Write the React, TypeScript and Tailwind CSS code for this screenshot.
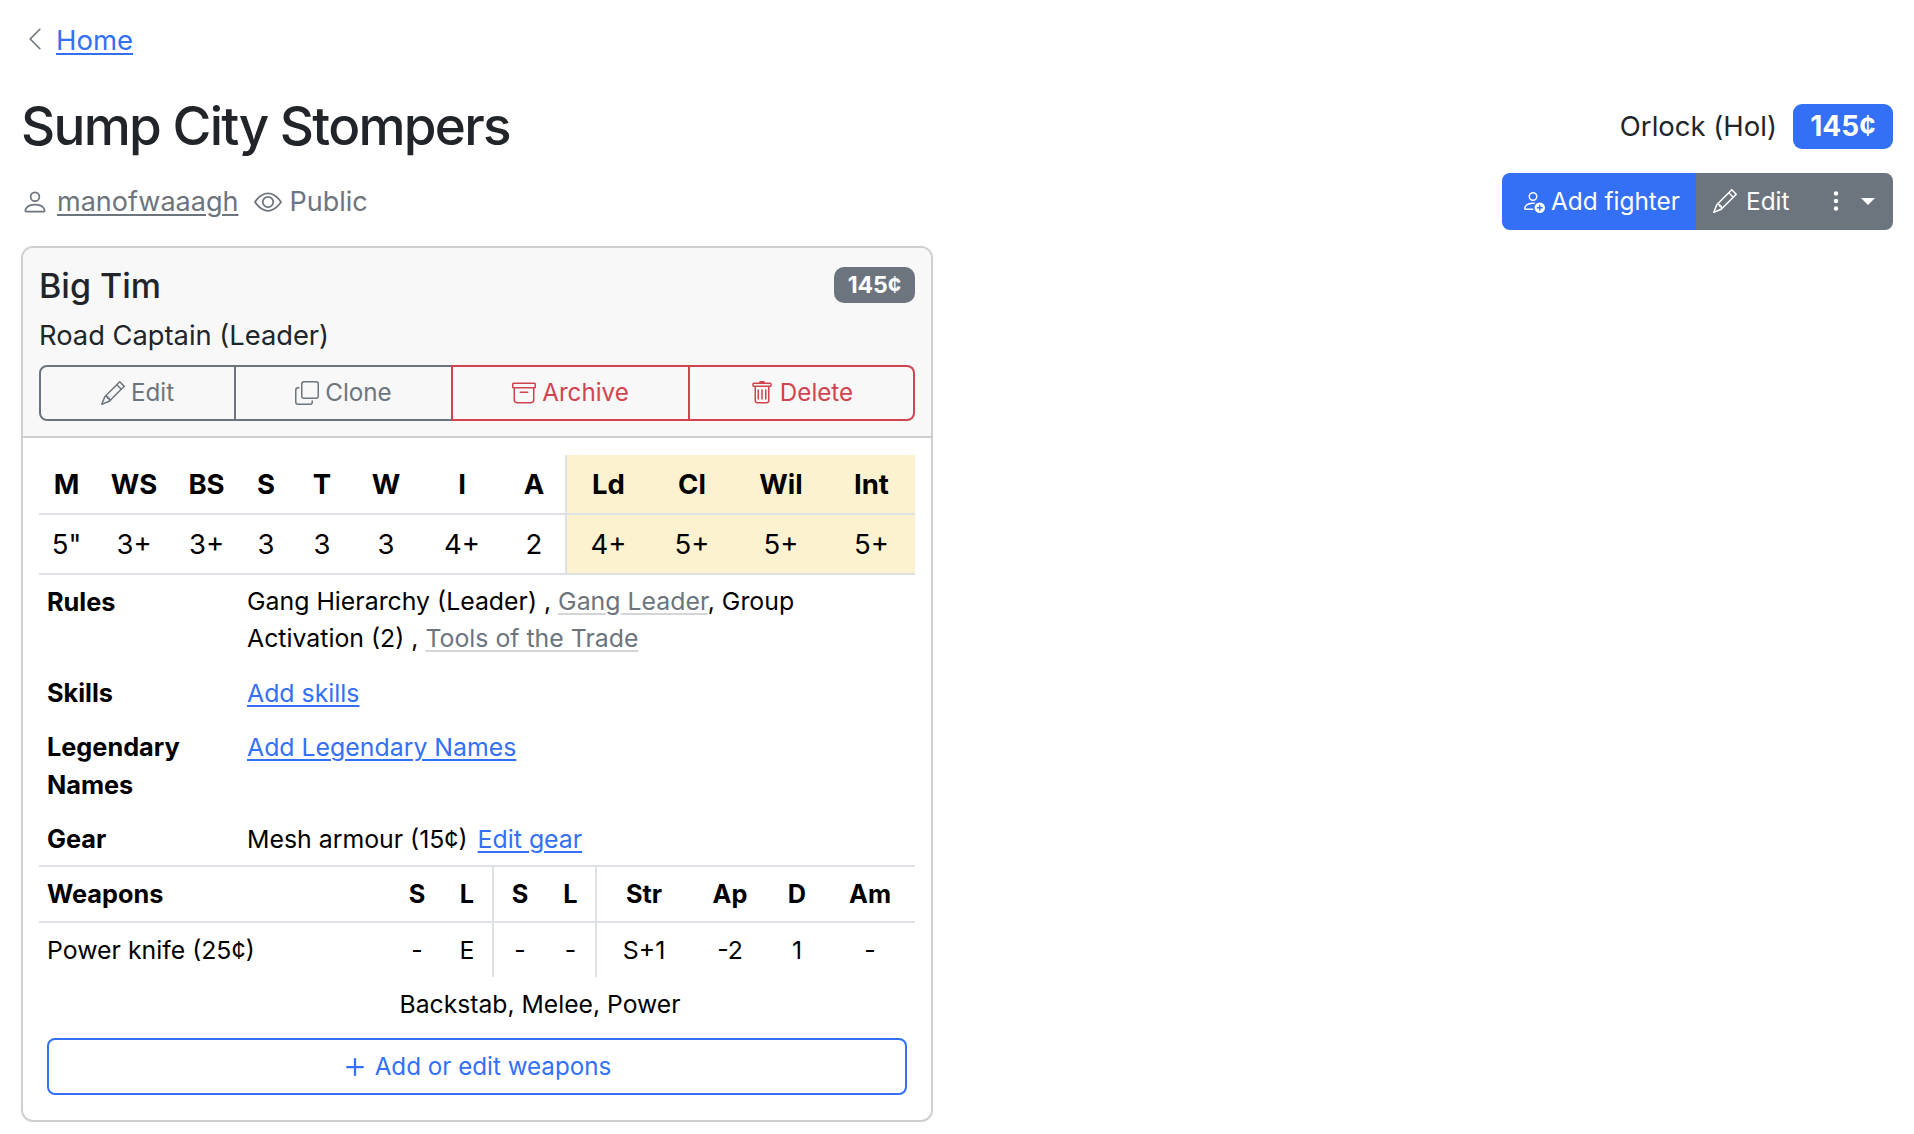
import React from "react";

const Chevron = ({ c = "" }: { c?: string }) => (
  <svg viewBox="0 0 16 16" fill="currentColor" className={c}>
    <path fillRule="evenodd" d="M11.354 1.646a.5.5 0 0 1 0 .708L5.707 8l5.647 5.646a.5.5 0 0 1-.708.708l-6-6a.5.5 0 0 1 0-.708l6-6a.5.5 0 0 1 .708 0" />
  </svg>
);
const Pencil = ({ c = "" }: { c?: string }) => (
  <svg viewBox="0 0 16 16" fill="currentColor" className={c}>
    <path d="M12.146.146a.5.5 0 0 1 .708 0l3 3a.5.5 0 0 1 0 .708l-10 10a.5.5 0 0 1-.168.11l-5 2a.5.5 0 0 1-.65-.65l2-5a.5.5 0 0 1 .11-.168zM11.207 2.5 13.5 4.793 14.793 3.5 12.5 1.207zm1.586 3L10.5 3.207 4 9.707V10h.5a.5.5 0 0 1 .5.5v.5h.5a.5.5 0 0 1 .5.5v.5h.293zm-9.761 5.175-.106.106-1.528 3.821 3.821-1.528.106-.106A.5.5 0 0 1 5 12.5V12h-.5a.5.5 0 0 1-.5-.5V11h-.5a.5.5 0 0 1-.468-.325" />
  </svg>
);
const Person = ({ c = "" }: { c?: string }) => (
  <svg viewBox="0 0 16 16" fill="currentColor" className={c}>
    <path d="M8 8a3 3 0 1 0 0-6 3 3 0 0 0 0 6m2-3a2 2 0 1 1-4 0 2 2 0 0 1 4 0m4 8c0 1-1 1-1 1H3s-1 0-1-1 1-4 6-4 6 3 6 4m-1-.004c-.001-.246-.154-.986-.832-1.664C11.516 10.68 10.289 10 8 10s-3.516.68-4.168 1.332c-.678.678-.83 1.418-.832 1.664z" />
  </svg>
);
const Eye = ({ c = "" }: { c?: string }) => (
  <svg viewBox="0 0 16 16" fill="currentColor" className={c}>
    <path d="M16 8s-3-5.5-8-5.5S0 8 0 8s3 5.5 8 5.5S16 8 16 8M1.173 8a13 13 0 0 1 1.66-2.043C4.12 4.668 5.88 3.5 8 3.5s3.879 1.168 5.168 2.457A13 13 0 0 1 14.828 8q-.086.13-.195.288c-.335.48-.83 1.12-1.465 1.755C11.879 11.332 10.119 12.5 8 12.5s-3.879-1.168-5.168-2.457A13 13 0 0 1 1.172 8z" />
    <path d="M8 5.5a2.5 2.5 0 1 0 0 5 2.5 2.5 0 0 0 0-5M4.5 8a3.5 3.5 0 1 1 7 0 3.5 3.5 0 0 1-7 0" />
  </svg>
);
const PersonAdd = ({ c = "" }: { c?: string }) => (
  <svg viewBox="0 0 16 16" fill="currentColor" className={c}>
    <path d="M12.5 16a3.5 3.5 0 1 0 0-7 3.5 3.5 0 0 0 0 7m.5-5v1h1a.5.5 0 0 1 0 1h-1v1a.5.5 0 0 1-1 0v-1h-1a.5.5 0 0 1 0-1h1v-1a.5.5 0 0 1 1 0m-2-6a3 3 0 1 1-6 0 3 3 0 0 1 6 0M8 7a2 2 0 1 0 0-4 2 2 0 0 0 0 4" />
    <path d="M8.256 14a4.5 4.5 0 0 1-.229-1.004H3c.001-.246.154-.986.832-1.664C4.484 10.68 5.711 10 8 10q.39 0 .74.025c.226-.341.496-.65.804-.918Q8.844 9.002 8 9c-5 0-6 3-6 4s1 1 1 1z" />
  </svg>
);
const Copy = ({ c = "" }: { c?: string }) => (
  <svg viewBox="0 0 16 16" fill="currentColor" fillRule="evenodd" className={c}>
    <path d="M4 2a2 2 0 0 1 2-2h8a2 2 0 0 1 2 2v8a2 2 0 0 1-2 2H6a2 2 0 0 1-2-2zm2-1a1 1 0 0 0-1 1v8a1 1 0 0 0 1 1h8a1 1 0 0 0 1-1V2a1 1 0 0 0-1-1zM2 5a1 1 0 0 0-1 1v8a1 1 0 0 0 1 1h8a1 1 0 0 0 1-1v-1h1v1a2 2 0 0 1-2 2H2a2 2 0 0 1-2-2V6a2 2 0 0 1 2-2h1v1z" />
  </svg>
);
const Archive = ({ c = "" }: { c?: string }) => (
  <svg viewBox="0 0 16 16" fill="currentColor" className={c}>
    <path d="M0 2a1 1 0 0 1 1-1h14a1 1 0 0 1 1 1v2a1 1 0 0 1-1 1v7.5a2.5 2.5 0 0 1-2.5 2.5h-9A2.5 2.5 0 0 1 1 12.5V5a1 1 0 0 1-1-1zm2 3v7.5A1.5 1.5 0 0 0 3.5 14h9a1.5 1.5 0 0 0 1.5-1.5V5zm13-3H1v2h14zM5 7.5a.5.5 0 0 1 .5-.5h5a.5.5 0 0 1 0 1h-5a.5.5 0 0 1-.5-.5" />
  </svg>
);
const Trash = ({ c = "" }: { c?: string }) => (
  <svg viewBox="0 0 16 16" fill="currentColor" className={c}>
    <path d="M5.5 5.5A.5.5 0 0 1 6 6v6a.5.5 0 0 1-1 0V6a.5.5 0 0 1 .5-.5m2.5 0a.5.5 0 0 1 .5.5v6a.5.5 0 0 1-1 0V6a.5.5 0 0 1 .5-.5m3 .5a.5.5 0 0 0-1 0v6a.5.5 0 0 0 1 0z" />
    <path d="M14.5 3a1 1 0 0 1-1 1H13v9a2 2 0 0 1-2 2H5a2 2 0 0 1-2-2V4h-.5a1 1 0 0 1-1-1V2a1 1 0 0 1 1-1H6a1 1 0 0 1 1-1h2a1 1 0 0 1 1 1h3.5a1 1 0 0 1 1 1zM4.118 4 4 4.059V13a1 1 0 0 0 1 1h6a1 1 0 0 0 1-1V4.059L11.882 4zM2.5 3h11V2h-11z" />
  </svg>
);
const Plus = ({ c = "" }: { c?: string }) => (
  <svg viewBox="0 0 16 16" fill="currentColor" className={c}>
    <path d="M8 4a.5.5 0 0 1 .5.5v3h3a.5.5 0 0 1 0 1h-3v3a.5.5 0 0 1-1 0v-3h-3a.5.5 0 0 1 0-1h3v-3A.5.5 0 0 1 8 4" />
  </svg>
);
const Dots = ({ c = "" }: { c?: string }) => (
  <svg viewBox="0 0 16 16" fill="currentColor" className={c}>
    <path d="M9.5 13a1.5 1.5 0 1 1-3 0 1.5 1.5 0 0 1 3 0m0-5a1.5 1.5 0 1 1-3 0 1.5 1.5 0 0 1 3 0m0-5a1.5 1.5 0 1 1-3 0 1.5 1.5 0 0 1 3 0" />
  </svg>
);

const link = "text-[#3370f6] underline decoration-2 underline-offset-[3px]";
const muted = "text-[#6c757d] underline decoration-2 decoration-[#d3d5d7] underline-offset-[3px]";
const stats1 = [["M", '5"', "w-[55px]"], ["WS", "3+", "w-[80px]"], ["BS", "3+", "w-[65px]"], ["S", "3", "w-[54px]"], ["T", "3", "w-[58px]"], ["W", "3", "w-[70px]"], ["I", "4+", "w-[82px]"], ["A", "2", "w-[62px]"]];
const stats2 = [["Ld", "4+", "w-[83px]"], ["Cl", "5+", "w-[84px]"], ["Wil", "5+", "w-[94px]"], ["Int", "5+", "flex-1"]];
const wcols = [
  ["S", "-", "w-[50px]"], ["L", "E", "w-[52px] border-r-2 border-[#dee2e6]"], ["S", "-", "w-[52px]"], ["L", "-", "w-[51px] border-r-2 border-[#dee2e6]"],
  ["Str", "S+1", "w-[94px]"], ["Ap", "-2", "w-[78px]"], ["D", "1", "w-[56px]"], ["Am", "-", "w-[90px]"],
];

const Row = ({ label, children, cls }: { label: React.ReactNode; children: React.ReactNode; cls: string }) => (
  <div className={`flex ${cls}`}>
    <div className="w-[200px] pl-[8px] font-bold text-[25.3px] text-black shrink-0">{label}</div>
    <div className="flex-1 text-black pl-[8px] pr-[60px]">{children}</div>
  </div>
);

const BtnCell = ({ children, cls }: { children: React.ReactNode; cls: string }) => (
  <div className={`flex items-center justify-center gap-[6px] ${cls}`}>{children}</div>
);

export default function App() {
  return (
    <div className="min-h-[1134px] bg-white px-[21px] pt-[21px] text-[#212529] text-[24.85px] leading-[38px] font-['Inter',sans-serif]">
      <div className="flex items-center h-[38px] gap-[8px] text-[27.5px]">
        <Chevron c="w-[26px] h-[26px] text-[#6c757d] -mt-[2px] ml-[1px]" />
        <a className={link}>Home</a>
      </div>
      <div className="flex items-center justify-between mt-[35px] h-[64px]">
        <h1 className="text-[53px] font-[550] leading-[64px] tracking-[-1.72px]">Sump City Stompers</h1>
        <div className="flex items-center gap-[16px] text-[27.5px]">
          <span>Orlock (Hol)</span>
          <span className="bg-[#3370f6] text-white font-bold text-[28px] leading-none rounded-[9px] h-[45px] w-[100px] flex items-center justify-center">145¢</span>
        </div>
      </div>
      <div className="flex items-center justify-between mt-[15px] h-[57px]">
        <div className="flex items-center text-[#6c757d] text-[27px]">
          <Person c="w-[28px] h-[28px] mr-[8px]" />
          <a className="underline decoration-2 underline-offset-[3px]">manofwaaagh</a>
          <Eye c="w-[28px] h-[28px] ml-[16px] mr-[7px]" />
          <span>Public</span>
        </div>
        <div className="flex h-[57px] rounded-[8px] overflow-hidden text-white text-[24.4px]">
          <div className="bg-[#3370f6] w-[194px] flex items-center pl-[19px] pb-[1px]">
            <PersonAdd c="w-[24px] h-[24px] mr-[6px]" />
            <span>Add fighter</span>
          </div>
          <div className="bg-[#6c757d] w-[197px] flex items-center pl-[17px] pb-[1px]">
            <Pencil c="w-[24px] h-[24px] mr-[9px]" />
            <span>Edit</span>
            <Dots c="w-[24px] h-[24px] ml-[35px]" />
            <span className="ml-[13px] w-0 h-0 border-x-[7px] border-x-transparent border-t-[7px] border-t-white" />
          </div>
        </div>
      </div>
      <div className="mt-[16px] w-[912px] h-[876px] border-2 border-[#cdcfd1] rounded-[12px] overflow-hidden flex flex-col">
        <div className="bg-[#f8f8f8] border-b-2 border-[#cdcfd1] h-[190px] px-[16px] pt-[19px] shrink-0">
          <div className="flex justify-between items-start">
            <div className="text-[34px] leading-[38px] font-medium">Big Tim</div>
            <span className="bg-[#6c757d] text-white font-bold text-[23px] leading-none rounded-[10px] h-[36px] w-[81px] flex items-center justify-center">145¢</span>
          </div>
          <div className="mt-[12px] text-[27.3px]">Road Captain (Leader)</div>
          <div className="mt-[10px] flex h-[56px] text-[24.2px]">
            <BtnCell cls="w-[197px] border-2 border-[#6c757d] rounded-l-[8px] text-[#6c757d]"><Pencil c="w-[24px] h-[24px]" />Edit</BtnCell>
            <BtnCell cls="w-[217px] border-y-2 border-r-2 border-[#6c757d] text-[#6c757d]"><Copy c="w-[24px] h-[24px]" />Clone</BtnCell>
            <BtnCell cls="w-[239px] border-2 border-[#d0444f] -ml-[2px] text-[#d0444f]"><Archive c="w-[24px] h-[24px]" />Archive</BtnCell>
            <BtnCell cls="flex-1 border-y-2 border-r-2 border-[#d0444f] rounded-r-[8px] text-[#d0444f]"><Trash c="w-[24px] h-[24px]" />Delete</BtnCell>
          </div>
        </div>
        <div className="px-[16px] pt-[17px] flex-1">
          <div className="flex text-black text-[27.5px]">
            {stats1.map(([h, v, w], i) => (
              <div key={i} className={`${w} text-center`}>
                <div className="h-[60px] border-b-2 border-[#dee2e6] font-bold flex items-center justify-center">{h}</div>
                <div className="h-[60px] border-b-2 border-[#dee2e6] flex items-center justify-center">{v}</div>
              </div>
            ))}
            <div className="flex flex-1 bg-[#fdf2d0] border-l-2 border-[#dee2e6]">
              {stats2.map(([h, v, w], i) => (
                <div key={i} className={`${w} text-center`}>
                  <div className="h-[60px] border-b-2 border-[#dee2e6] font-bold flex items-center justify-center">{h}</div>
                  <div className="h-[60px] border-b-2 border-[#dee2e6] flex items-center justify-center">{v}</div>
                </div>
              ))}
            </div>
          </div>
          <Row label="Rules" cls="mt-[8px] leading-[37px]">
            Gang Hierarchy (Leader) , <a className={muted}>Gang Leader</a>, Group Activation (2) , <a className={muted}>Tools of the Trade</a>
          </Row>
          <Row label="Skills" cls="mt-[17px]"><a className={link}>Add skills</a></Row>
          <Row label={<>Legendary<br />Names</>} cls="mt-[16px]"><a className={link}>Add Legendary Names</a></Row>
          <Row label="Gear" cls="mt-[16px]">Mesh armour (15¢) <a className={`${link} ml-[3px]`}>Edit gear</a></Row>
          <div className="mt-[7px] flex text-black border-t-2 border-[#dee2e6]">
            <div className="flex-1 min-w-0">
              <div className="h-[56px] border-b-2 border-[#dee2e6] pl-[8px] font-bold text-[25.3px] flex items-center">Weapons</div>
              <div className="h-[54px] pl-[8px] flex items-center">Power knife (25¢)</div>
            </div>
            {wcols.map(([h, v, w], i) => (
              <div key={i} className={`${w} text-center`}>
                <div className="h-[56px] border-b-2 border-[#dee2e6] font-bold text-[25.3px] flex items-center justify-center">{h}</div>
                <div className="h-[54px] flex items-center justify-center">{v}</div>
              </div>
            ))}
          </div>
          <div className="text-center text-[24.7px] text-black mt-[8px] pl-[126px]">Backstab, Melee, Power</div>
          <div className="mt-[15px] mx-2 h-[57px] border-2 border-[#3370f6] rounded-[8px] text-[#3370f6] text-[24.2px] flex items-center justify-center pr-[6px]">
            <Plus c="w-[36px] h-[36px] mr-[2px]" />Add or edit weapons
          </div>
        </div>
      </div>
    </div>
  );
}
